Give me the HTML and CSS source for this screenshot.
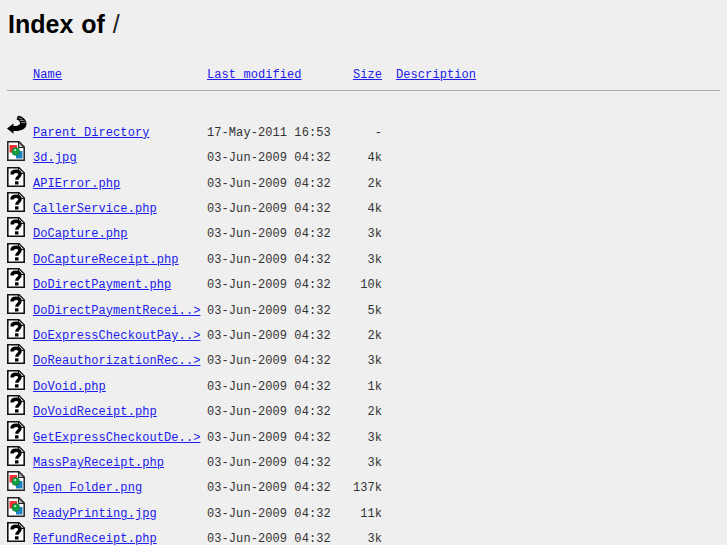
FILE: index.html
```html
<!DOCTYPE html>
<html>
<head>
<meta charset="utf-8">
<title>Index of /</title>
<link rel="stylesheet" href="styles.css">
</head>
<body>
<svg class="defs" width="0" height="0" aria-hidden="true">
  <symbol id="back" viewBox="0 0 20 20">
    <path d="M0 13.500L6.500 8.500V11C10 11 12.500 10.500 13 8.500C13.300 6.500 11.500 5 9.500 4.500L11 .8C16 1 19.500 5 19.500 9C19.500 14 13.500 16.500 6.500 16V18.800z" fill="#000"/>
    <path d="M11.500 2.800l4 1.200M12.500 5.200l5 .6M14 7.800l4.500-.2" stroke="#8a8a8a" stroke-width="1" fill="none"/>
  </symbol>
  <symbol id="image" viewBox="0 0 18 20">
    <path d="M.8.800H12L17.200 6V19.200H.8z" fill="#fff" stroke="#222" stroke-width="1.500"/>
    <path d="M11.500 1V6.500H17z" fill="#bbb" stroke="#222" stroke-width="1"/>
    <rect x="2.500" y="4" width="7.500" height="7.500" fill="#f43030"/>
    <rect x="9" y="10" width="6.500" height="7.500" fill="#1c84c4"/>
    <circle cx="8.800" cy="10.500" r="3.900" fill="#12a040" stroke="#164" stroke-width=".6"/>
    <circle cx="8" cy="9" r="1.100" fill="#c4ecc4"/>
  </symbol>
  <symbol id="unknown" viewBox="0 0 18 20">
    <path d="M.8.800H12L17.200 6V19.200H.8z" fill="#fff" stroke="#111" stroke-width="1.600"/>
    <path d="M11.500 1V6.500H17" fill="#ccc" stroke="#111" stroke-width="1.200"/>
    <path d="M5 7.500C5 5 6.800 4.200 9 4.200C11.500 4.200 13 5.300 13 7.200C13 10 9.800 10 9.800 12.800" fill="none" stroke="#000" stroke-width="3.400"/>
    <rect x="8" y="14.300" width="3.500" height="3.200" fill="#000"/>
  </symbol>
</svg>
<h1 class="title">Index of <span class="slash">/</span></h1>
<div class="head">
  <span class="cell-name"><a href="#">Name</a></span>
  <span class="cell-date"><a href="#">Last modified</a></span>
  <span class="cell-size"><a href="#">Size</a></span>
  <span class="cell-desc"><a href="#">Description</a></span>
</div>
<hr class="rule">
<div class="list">
  <div class="row"><svg class="icon icon-back"><use href="#back"/></svg><span class="cell-name"><a href="#">Parent Directory</a></span><span class="cell-date">17-May-2011 16:53</span><span class="cell-size">-</span></div>
  <div class="row"><svg class="icon"><use href="#image"/></svg><span class="cell-name"><a href="#">3d.jpg</a></span><span class="cell-date">03-Jun-2009 04:32</span><span class="cell-size">4k</span></div>
  <div class="row"><svg class="icon"><use href="#unknown"/></svg><span class="cell-name"><a href="#">APIError.php</a></span><span class="cell-date">03-Jun-2009 04:32</span><span class="cell-size">2k</span></div>
  <div class="row"><svg class="icon"><use href="#unknown"/></svg><span class="cell-name"><a href="#">CallerService.php</a></span><span class="cell-date">03-Jun-2009 04:32</span><span class="cell-size">4k</span></div>
  <div class="row"><svg class="icon"><use href="#unknown"/></svg><span class="cell-name"><a href="#">DoCapture.php</a></span><span class="cell-date">03-Jun-2009 04:32</span><span class="cell-size">3k</span></div>
  <div class="row"><svg class="icon"><use href="#unknown"/></svg><span class="cell-name"><a href="#">DoCaptureReceipt.php</a></span><span class="cell-date">03-Jun-2009 04:32</span><span class="cell-size">3k</span></div>
  <div class="row"><svg class="icon"><use href="#unknown"/></svg><span class="cell-name"><a href="#">DoDirectPayment.php</a></span><span class="cell-date">03-Jun-2009 04:32</span><span class="cell-size">10k</span></div>
  <div class="row"><svg class="icon"><use href="#unknown"/></svg><span class="cell-name"><a href="#">DoDirectPaymentRecei..&gt;</a></span><span class="cell-date">03-Jun-2009 04:32</span><span class="cell-size">5k</span></div>
  <div class="row"><svg class="icon"><use href="#unknown"/></svg><span class="cell-name"><a href="#">DoExpressCheckoutPay..&gt;</a></span><span class="cell-date">03-Jun-2009 04:32</span><span class="cell-size">2k</span></div>
  <div class="row"><svg class="icon"><use href="#unknown"/></svg><span class="cell-name"><a href="#">DoReauthorizationRec..&gt;</a></span><span class="cell-date">03-Jun-2009 04:32</span><span class="cell-size">3k</span></div>
  <div class="row"><svg class="icon"><use href="#unknown"/></svg><span class="cell-name"><a href="#">DoVoid.php</a></span><span class="cell-date">03-Jun-2009 04:32</span><span class="cell-size">1k</span></div>
  <div class="row"><svg class="icon"><use href="#unknown"/></svg><span class="cell-name"><a href="#">DoVoidReceipt.php</a></span><span class="cell-date">03-Jun-2009 04:32</span><span class="cell-size">2k</span></div>
  <div class="row"><svg class="icon"><use href="#unknown"/></svg><span class="cell-name"><a href="#">GetExpressCheckoutDe..&gt;</a></span><span class="cell-date">03-Jun-2009 04:32</span><span class="cell-size">3k</span></div>
  <div class="row"><svg class="icon"><use href="#unknown"/></svg><span class="cell-name"><a href="#">MassPayReceipt.php</a></span><span class="cell-date">03-Jun-2009 04:32</span><span class="cell-size">3k</span></div>
  <div class="row"><svg class="icon"><use href="#image"/></svg><span class="cell-name"><a href="#">Open Folder.png</a></span><span class="cell-date">03-Jun-2009 04:32</span><span class="cell-size">137k</span></div>
  <div class="row"><svg class="icon"><use href="#image"/></svg><span class="cell-name"><a href="#">ReadyPrinting.jpg</a></span><span class="cell-date">03-Jun-2009 04:32</span><span class="cell-size">11k</span></div>
  <div class="row"><svg class="icon"><use href="#unknown"/></svg><span class="cell-name"><a href="#">RefundReceipt.php</a></span><span class="cell-date">03-Jun-2009 04:32</span><span class="cell-size">3k</span></div>
</div>
</body>
</html>
```
FILE: styles.css
```css
html, body {
  margin: 0;
  height: 545px;
  overflow: hidden;
}
body {
  background: #efefef;
  color: #333;
  padding: 0 7px;
  font-family: "Liberation Mono", monospace;
  font-size: 12px;
  letter-spacing: 0.08px;
}
.defs {
  position: absolute;
}
.title {
  margin: 0;
  padding: 10px 0 0 1px;
  height: 47px;
  box-sizing: border-box;
  font: bold 25px/28px "Liberation Sans", sans-serif;
  letter-spacing: 0;
  word-spacing: 1px;
  color: #000;
}
.slash {
  font-weight: normal;
  color: #222;
}
a {
  color: #2020ee;
}
.head, .row {
  display: grid;
  grid-template-columns: 26px 174px 145px 30px 14px 1fr;
  align-items: end;
  white-space: pre;
}
.head {
  margin-top: 21px;
  height: 14px;
  line-height: 14px;
}
.head .cell-name { grid-column: 2; }
.head .cell-date { grid-column: 3; }
.head .cell-size { grid-column: 4; text-align: right; }
.head .cell-desc { grid-column: 6; }
.rule {
  margin: 8px 0 0;
  height: 1px;
  border: 0;
  background: #aaa;
}
.list {
  margin-top: 23.5px;
}
.row {
  height: 25.4px;
  line-height: 14px;
}
.row .cell-size {
  text-align: right;
}
.icon {
  width: 18px;
  height: 20px;
  justify-self: start;
  margin-bottom: 4px;
}
.icon-back {
  width: 20px;
  margin-bottom: 5px;
}
```
